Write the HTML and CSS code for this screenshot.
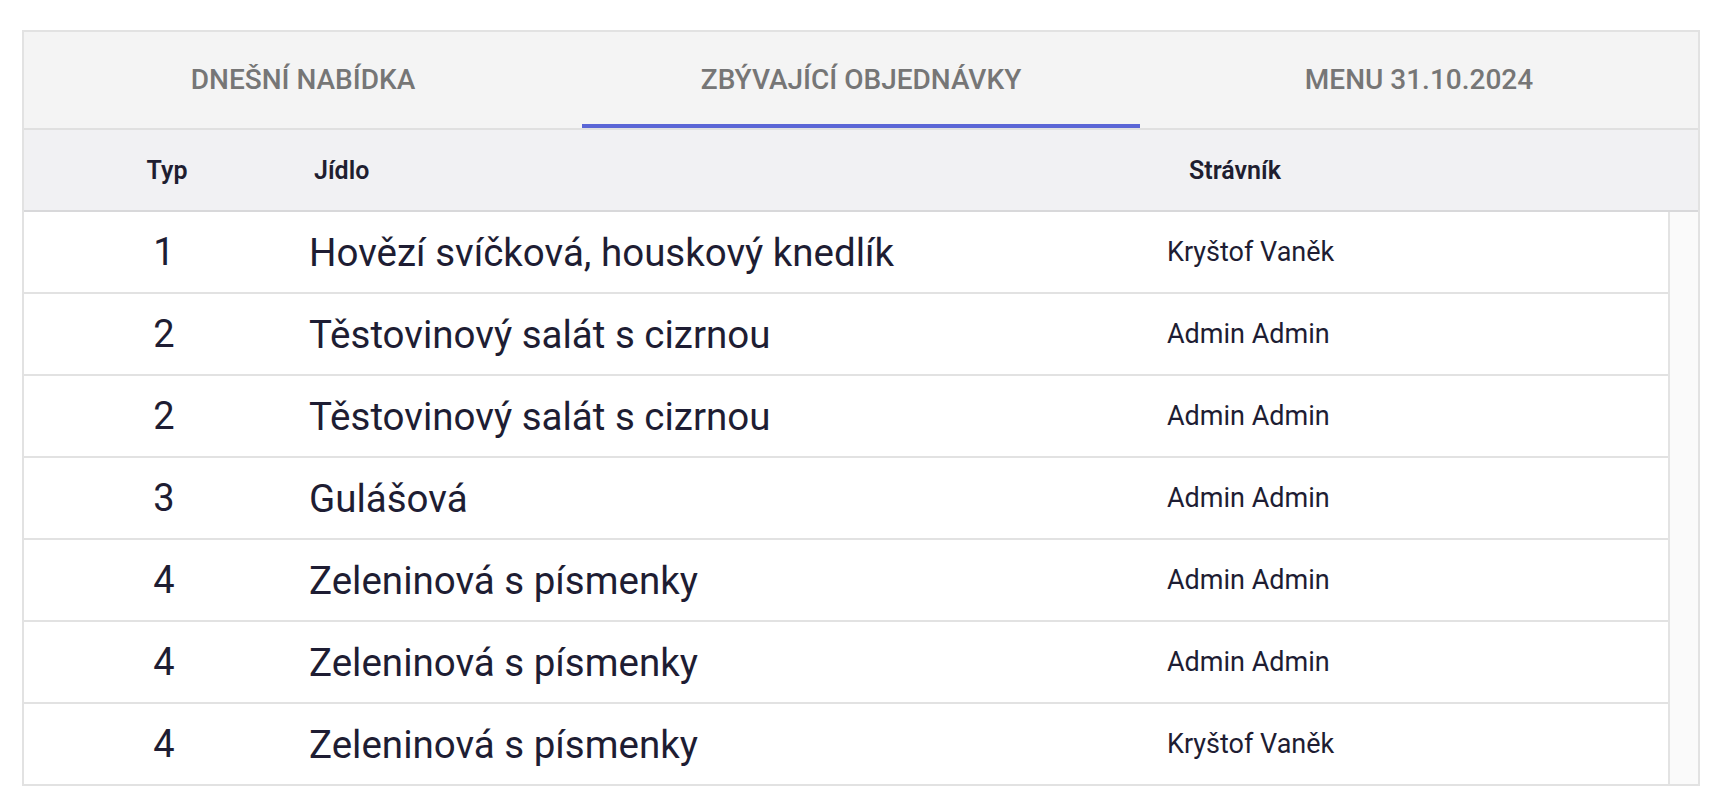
FILE: index.html
```html
<!DOCTYPE html>
<html lang="cs">
<head>
	<meta charset="UTF-8">
	<title>Objednávky</title>
	<link rel="stylesheet" href="styles.css">
</head>
<body>
	<div class="panel">
		<div class="tabs">
			<div class="tab">DNEŠNÍ NABÍDKA</div>
			<div class="tab active">ZBÝVAJÍCÍ OBJEDNÁVKY</div>
			<div class="tab">MENU 31.10.2024</div>
		</div>
		<div class="thead">
			<div class="th th_type">Typ</div>
			<div class="th">Jídlo</div>
			<div class="th">Strávník</div>
		</div>
		<div class="body_wrap">
			<div class="rows">
				<div class="row">
					<div class="td_type">1</div>
					<div class="td_food">Hovězí svíčková, houskový knedlík</div>
					<div class="td_name">Kryštof Vaněk</div>
				</div>
				<div class="row">
					<div class="td_type">2</div>
					<div class="td_food">Těstovinový salát s cizrnou</div>
					<div class="td_name">Admin Admin</div>
				</div>
				<div class="row">
					<div class="td_type">2</div>
					<div class="td_food">Těstovinový salát s cizrnou</div>
					<div class="td_name">Admin Admin</div>
				</div>
				<div class="row">
					<div class="td_type">3</div>
					<div class="td_food">Gulášová</div>
					<div class="td_name">Admin Admin</div>
				</div>
				<div class="row">
					<div class="td_type">4</div>
					<div class="td_food">Zeleninová s písmenky</div>
					<div class="td_name">Admin Admin</div>
				</div>
				<div class="row">
					<div class="td_type">4</div>
					<div class="td_food">Zeleninová s písmenky</div>
					<div class="td_name">Admin Admin</div>
				</div>
				<div class="row">
					<div class="td_type">4</div>
					<div class="td_food">Zeleninová s písmenky</div>
					<div class="td_name">Kryštof Vaněk</div>
				</div>
			</div>
			<div class="track"></div>
		</div>
	</div>
</body>
</html>
```

FILE: styles.css
```css
*{
	margin:0;
	padding:0;
	box-sizing:border-box;
}
body{
	background:#fff;
	font-family:Roboto, "Liberation Sans", sans-serif;
	color:#1e1d33;
}
.panel{
	width:1678px;
	margin:30px 0 0 22px;
	border:2px solid #e2e2e2;
}
/* zalozky */
.tabs{
	display:grid;
	grid-template-columns:1fr 1fr 1fr;
	height:98px;
	background:#f4f4f4;
	border-bottom:2px solid #e0e0e0;
}
.tab{
	display:flex;
	align-items:center;
	justify-content:center;
	padding-bottom:2px;
	font-size:28px;
	font-weight:500;
	color:#767676;
}
.tab.active{
	box-shadow:inset 0 -4px 0 #5b66d6;
}
/* hlavicka tabulky */
.thead{
	display:grid;
	grid-template-columns:286px 875px 1fr;
	height:82px;
	background:#f1f1f3;
	border-bottom:2px solid #d8d8da;
	align-items:center;
}
.th{
	padding-left:4px;
	font-size:25px;
	font-weight:600;
	color:#1f1e30;
}
.th_type{
	padding-left:0;
	text-align:center;
}
/* radky */
.body_wrap{
	display:flex;
}
.rows{
	flex:1;
}
.row{
	display:grid;
	grid-template-columns:280px 855px 1fr;
	align-items:center;
	height:82px;
	border-bottom:2px solid #e2e2e2;
}
.row:last-child{
	height:80px;
	border-bottom:none;
}
.td_type{
	text-align:center;
	font-size:38px;
}
.td_food{
	padding-left:5px;
	font-size:38.5px;
}
.td_name{
	padding-left:8px;
	font-size:27px;
}
.track{
	width:30px;
	background:#fafafa;
	border-left:2px solid #e3e3e3;
}
```
